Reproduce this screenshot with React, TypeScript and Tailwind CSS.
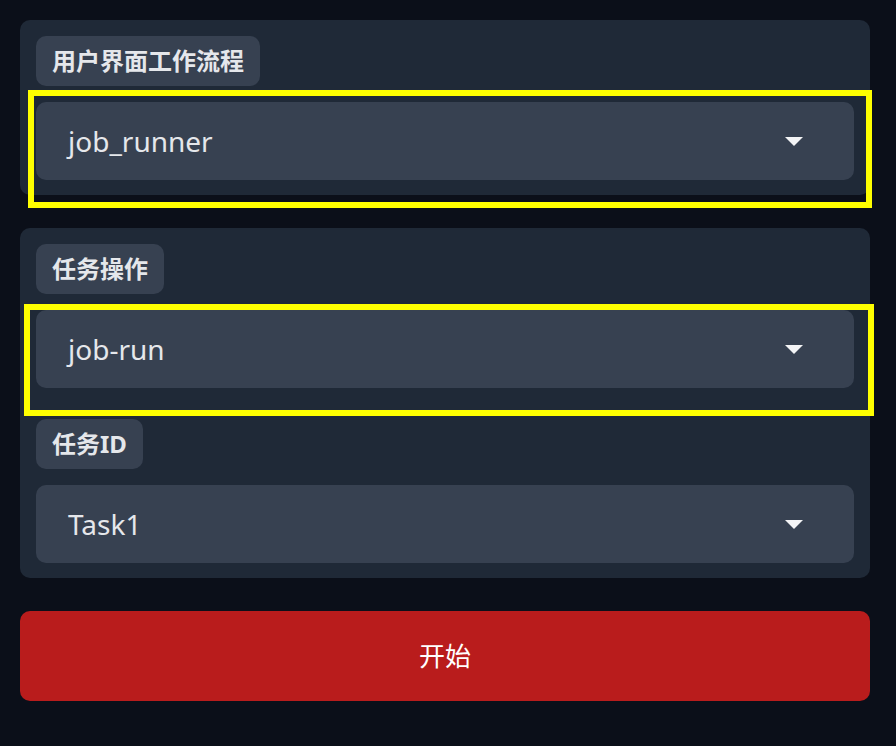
import React from "react";

const font = { fontFamily: '"Noto Sans", "Noto Sans CJK SC", sans-serif' };

function Caret() {
  return (
    <svg width="18" height="9" viewBox="0 0 18 9" className="shrink-0">
      <polygon points="0,0 18,0 9,9" fill="#f3f4f6" />
    </svg>
  );
}

function Label({ text }: { text: string }) {
  return (
    <div className="flex">
      <div className="h-[50px] px-4 flex items-center rounded-[10px] bg-[#374151] text-[#e5e7eb] text-[24px] font-bold leading-none">
        {text}
      </div>
    </div>
  );
}

function Dropdown({ value }: { value: string }) {
  return (
    <div className="h-[78px] rounded-[10px] bg-[#374151] flex items-center justify-between pl-8 pr-[51px]">
      <span className="text-[28px] text-[#e5e7eb] leading-none">{value}</span>
      <Caret />
    </div>
  );
}

export default function App() {
  return (
    <div className="relative w-[896px] h-[746px] bg-[#0b0f19] pl-5 pr-[26px] pt-5" style={font}>
      <div className="flex flex-col gap-[33px]">
        <div className="rounded-[10px] bg-[#1f2937] p-4 pb-[15px] flex flex-col gap-4">
          <Label text="用户界面工作流程" />
          <Dropdown value="job_runner" />
        </div>
        <div className="rounded-[10px] bg-[#1f2937] p-4 pb-[15px] flex flex-col">
          <Label text="任务操作" />
          <div className="mt-4">
            <Dropdown value="job-run" />
          </div>
          <div className="mt-[31px]">
            <Label text="任务ID" />
          </div>
          <div className="mt-4">
            <Dropdown value="Task1" />
          </div>
        </div>
        <button className="h-[90px] rounded-[10px] bg-[#b91c1c] text-white text-[26px] flex items-center justify-center">
          开始
        </button>
      </div>
      <div className="absolute left-[28px] top-[90px] w-[844px] h-[118px] border-[6px] border-[#ffff00] pointer-events-none" />
      <div className="absolute left-[24px] top-[304px] w-[850px] h-[112px] border-[6px] border-[#ffff00] pointer-events-none" />
    </div>
  );
}
